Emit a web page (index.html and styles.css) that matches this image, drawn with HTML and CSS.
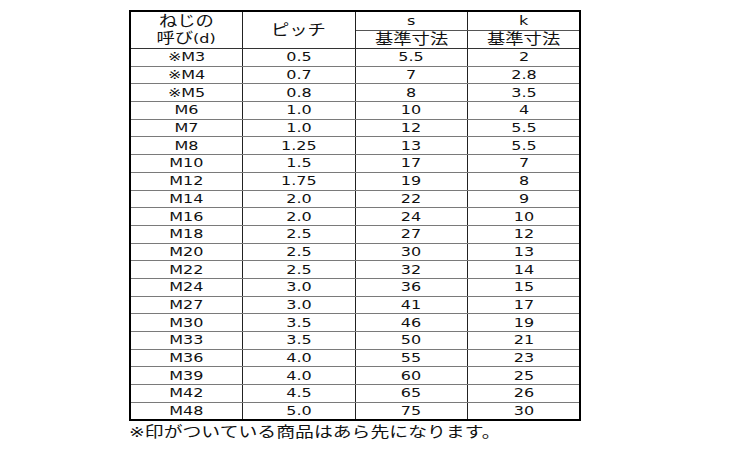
FILE: index.html
```html
<!DOCTYPE html>
<html lang="ja">
<head>
<meta charset="utf-8">
<link rel="stylesheet" href="styles.css">
</head>
<body>
<div class="wrap">
<table class="spec">
  <colgroup><col class="c"><col class="c"><col class="c"><col class="c"></colgroup>
  <thead>
    <tr class="h1">
      <th rowspan="2" class="two"><span class="t"><span class="j">ねじの</span></span><br><span class="t"><span class="j">呼び</span>(d)</span></th>
      <th rowspan="2"><span class="t j">ピッチ</span></th>
      <th class="sub"><span class="t">s</span></th>
      <th class="sub"><span class="t">k</span></th>
    </tr>
    <tr class="h2">
      <th><span class="t j">基準寸法</span></th>
      <th><span class="t j">基準寸法</span></th>
    </tr>
  </thead>
  <tbody>
    <tr><td><span class="t">※M3</span></td><td><span class="t">0.5</span></td><td><span class="t">5.5</span></td><td><span class="t">2</span></td></tr>
    <tr><td><span class="t">※M4</span></td><td><span class="t">0.7</span></td><td><span class="t">7</span></td><td><span class="t">2.8</span></td></tr>
    <tr><td><span class="t">※M5</span></td><td><span class="t">0.8</span></td><td><span class="t">8</span></td><td><span class="t">3.5</span></td></tr>
    <tr><td><span class="t">M6</span></td><td><span class="t">1.0</span></td><td><span class="t">10</span></td><td><span class="t">4</span></td></tr>
    <tr><td><span class="t">M7</span></td><td><span class="t">1.0</span></td><td><span class="t">12</span></td><td><span class="t">5.5</span></td></tr>
    <tr><td><span class="t">M8</span></td><td><span class="t">1.25</span></td><td><span class="t">13</span></td><td><span class="t">5.5</span></td></tr>
    <tr><td><span class="t">M10</span></td><td><span class="t">1.5</span></td><td><span class="t">17</span></td><td><span class="t">7</span></td></tr>
    <tr><td><span class="t">M12</span></td><td><span class="t">1.75</span></td><td><span class="t">19</span></td><td><span class="t">8</span></td></tr>
    <tr><td><span class="t">M14</span></td><td><span class="t">2.0</span></td><td><span class="t">22</span></td><td><span class="t">9</span></td></tr>
    <tr><td><span class="t">M16</span></td><td><span class="t">2.0</span></td><td><span class="t">24</span></td><td><span class="t">10</span></td></tr>
    <tr><td><span class="t">M18</span></td><td><span class="t">2.5</span></td><td><span class="t">27</span></td><td><span class="t">12</span></td></tr>
    <tr><td><span class="t">M20</span></td><td><span class="t">2.5</span></td><td><span class="t">30</span></td><td><span class="t">13</span></td></tr>
    <tr><td><span class="t">M22</span></td><td><span class="t">2.5</span></td><td><span class="t">32</span></td><td><span class="t">14</span></td></tr>
    <tr><td><span class="t">M24</span></td><td><span class="t">3.0</span></td><td><span class="t">36</span></td><td><span class="t">15</span></td></tr>
    <tr><td><span class="t">M27</span></td><td><span class="t">3.0</span></td><td><span class="t">41</span></td><td><span class="t">17</span></td></tr>
    <tr><td><span class="t">M30</span></td><td><span class="t">3.5</span></td><td><span class="t">46</span></td><td><span class="t">19</span></td></tr>
    <tr><td><span class="t">M33</span></td><td><span class="t">3.5</span></td><td><span class="t">50</span></td><td><span class="t">21</span></td></tr>
    <tr><td><span class="t">M36</span></td><td><span class="t">4.0</span></td><td><span class="t">55</span></td><td><span class="t">23</span></td></tr>
    <tr><td><span class="t">M39</span></td><td><span class="t">4.0</span></td><td><span class="t">60</span></td><td><span class="t">25</span></td></tr>
    <tr><td><span class="t">M42</span></td><td><span class="t">4.5</span></td><td><span class="t">65</span></td><td><span class="t">26</span></td></tr>
    <tr><td><span class="t">M48</span></td><td><span class="t">5.0</span></td><td><span class="t">75</span></td><td><span class="t">30</span></td></tr>
  </tbody>
</table>
<p class="note"><span class="nt">※印がついている商品はあら先になります。</span></p>
</div>
</body>
</html>
```

FILE: styles.css
```css
html, body {
  margin: 0;
  padding: 0;
  background: #ffffff;
}
body {
  font-family: "DejaVu Sans", "Noto Sans CJK JP", sans-serif;
  color: #111111;
}
.wrap {
  padding: 10px 0 0 129px;
}
.spec {
  border-collapse: collapse;
  table-layout: fixed;
  width: 450px;
  border: 2px solid #000000;
  font-size: 12.5px;
}
.spec col.c {
  width: 112.5px;
}
.spec th,
.spec td {
  padding: 0;
  text-align: center;
  vertical-align: middle;
  font-weight: normal;
  border-left: 1px solid #222222;
  border-right: 1px solid #222222;
  border-top: 1px solid #7a7a7a;
  border-bottom: 1px solid #7a7a7a;
  line-height: 14px;
  white-space: nowrap;
}
.spec thead th {
  border-bottom: 1px solid #333333;
}
.spec .h1 th.sub {
  border-bottom: 1px solid #555555;
}
.spec .h1 th {
  height: 18px;
}
.spec .h2 th {
  height: 17px;
}
.spec td {
  height: 16.7px;
}
.spec th.two {
  line-height: 17px;
}
.t {
  display: inline-block;
  transform: scaleX(1.28);
}
.j {
  font-size: 14.3px;
}
.note {
  margin: 1px 0 0 0;
  font-size: 14.5px;
  line-height: 20px;
}
.nt {
  display: inline-block;
  transform-origin: left center;
  transform: scaleX(1.3);
}
```
